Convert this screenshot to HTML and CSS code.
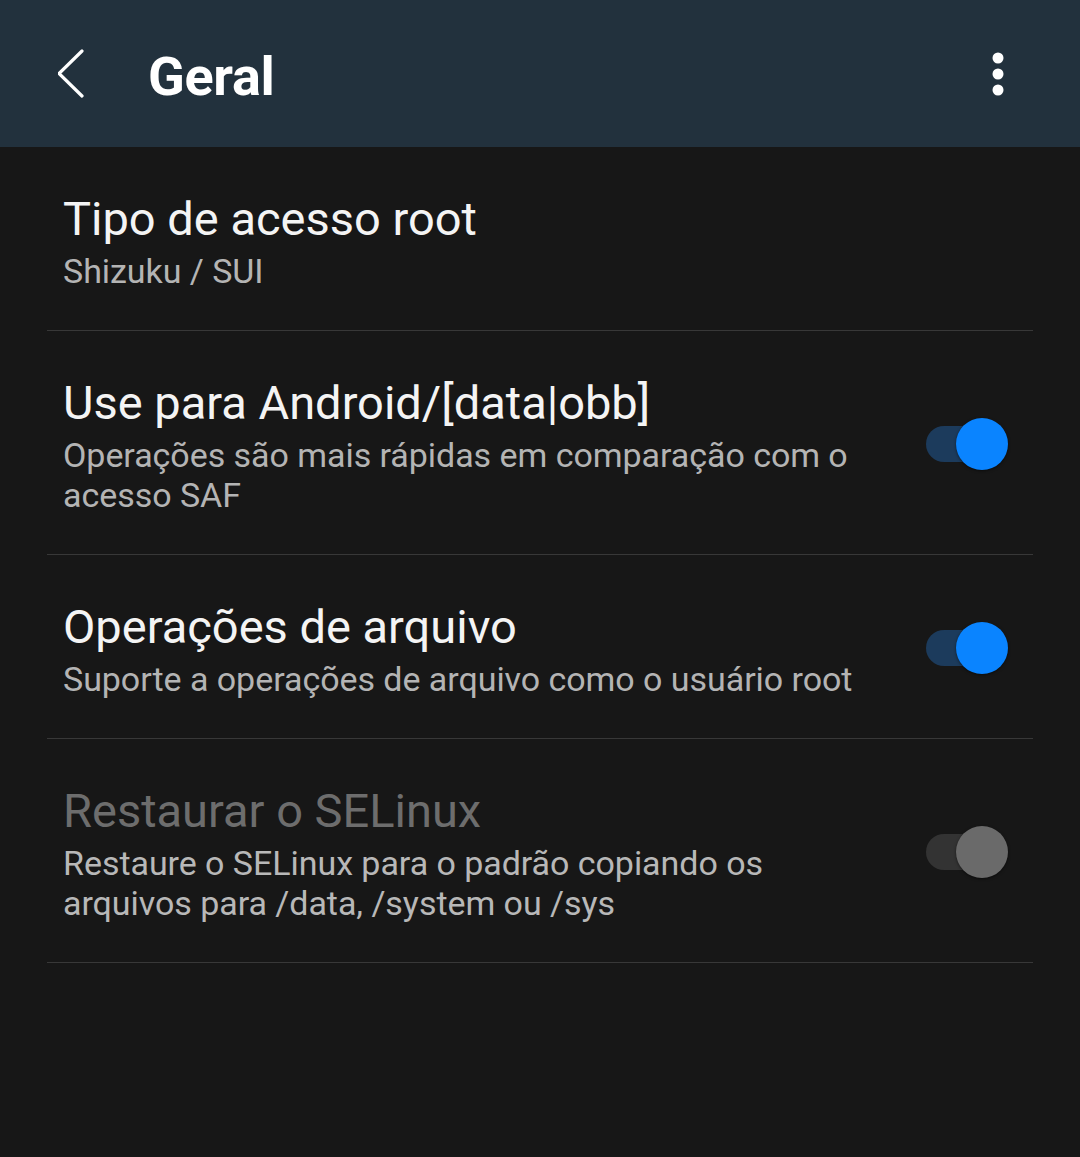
FILE: index.html
```html
<!DOCTYPE html>
<html lang="pt">
<head>
<meta charset="utf-8">
<title>Geral</title>
<link rel="stylesheet" href="styles.css">
</head>
<body>
<header class="appbar">
  <button class="icon-btn back" aria-label="Voltar">
    <svg width="40" height="60" viewBox="0 0 40 60"><path d="M24 11 L1 33.5 L24 56" fill="none" stroke="#fff" stroke-width="3.2" stroke-linecap="round" stroke-linejoin="round"/></svg>
  </button>
  <h1 class="title">Geral</h1>
  <button class="icon-btn menu" aria-label="Mais opções">
    <svg width="14" height="46" viewBox="0 0 14 46"><circle cx="7" cy="7" r="5.5" fill="#fff"/><circle cx="7" cy="23" r="5.5" fill="#fff"/><circle cx="7" cy="39" r="5.5" fill="#fff"/></svg>
  </button>
</header>
<main class="list">
  <div class="row">
    <div class="text">
      <div class="row-title">Tipo de acesso root</div>
      <div class="row-sub">Shizuku / SUI</div>
    </div>
  </div>
  <div class="row">
    <div class="text">
      <div class="row-title">Use para Android/[data|obb]</div>
      <div class="row-sub">Operações são mais rápidas em comparação com o acesso SAF</div>
    </div>
    <div class="switch on"><span class="track"></span><span class="thumb"></span></div>
  </div>
  <div class="row">
    <div class="text">
      <div class="row-title">Operações de arquivo</div>
      <div class="row-sub">Suporte a operações de arquivo como o usuário root</div>
    </div>
    <div class="switch on"><span class="track"></span><span class="thumb"></span></div>
  </div>
  <div class="row disabled">
    <div class="text">
      <div class="row-title">Restaurar o SELinux</div>
      <div class="row-sub">Restaure o SELinux para o padrão copiando os arquivos para /data, /system ou /sys</div>
    </div>
    <div class="switch off"><span class="track"></span><span class="thumb"></span></div>
  </div>
</main>
</body>
</html>
```
FILE: styles.css
```css
* { box-sizing: border-box; }
html, body {
  margin: 0;
  padding: 0;
  background: #171717;
  font-family: Roboto, "Noto Sans", sans-serif;
}
body { width: 1080px; height: 1157px; overflow: hidden; }

.appbar {
  height: 147px;
  background: #22313d;
  display: flex;
  align-items: center;
  padding: 0 0 0 58px;
}
.icon-btn {
  background: none;
  border: 0;
  padding: 0;
  display: flex;
  align-items: center;
  justify-content: center;
}
.back { width: 40px; height: 60px; margin-top: -8px; }
.back svg { display: block; }
.title {
  margin: 6px 0 0 50px;
  color: #ffffff;
  font-size: 54px;
  font-weight: 700;
  letter-spacing: -0.3px;
  flex: 1;
  line-height: 1;
}
.menu { width: 14px; height: 46px; margin-right: 75px; margin-top: 0; }

.list { margin: 0 47px; }
.row {
  display: flex;
  align-items: center;
  padding: 46px 25px 39px 16px;
  border-bottom: 1px solid #383838;
}
.text { flex: 1; min-width: 0; padding-right: 40px; }
.row-title {
  color: #f4f4f4;
  font-size: 47px;
  line-height: 52px;
}
.row-sub {
  color: #b4b4b4;
  font-size: 34px;
  line-height: 40px;
  margin-top: 6px;
  letter-spacing: -0.05px;
}
.disabled .row-title { color: #6d6d6d; }
.disabled .row-sub { color: #b8b8b8; }

.switch {
  position: relative;
  width: 82px;
  height: 52px;
  flex: none;
  margin-top: -4px;
}
.switch .track {
  position: absolute;
  left: 0;
  top: 8px;
  width: 72px;
  height: 36px;
  border-radius: 18px;
  background: #1c3b5c;
}
.switch .thumb {
  position: absolute;
  right: 0;
  top: 0;
  width: 52px;
  height: 52px;
  border-radius: 50%;
  background: #0a84ff;
  box-shadow: 0 1px 3px rgba(0,0,0,0.5);
}
.switch.off .track { background: #333333; }
.switch.off .thumb { background: #6a6a6a; }
```
